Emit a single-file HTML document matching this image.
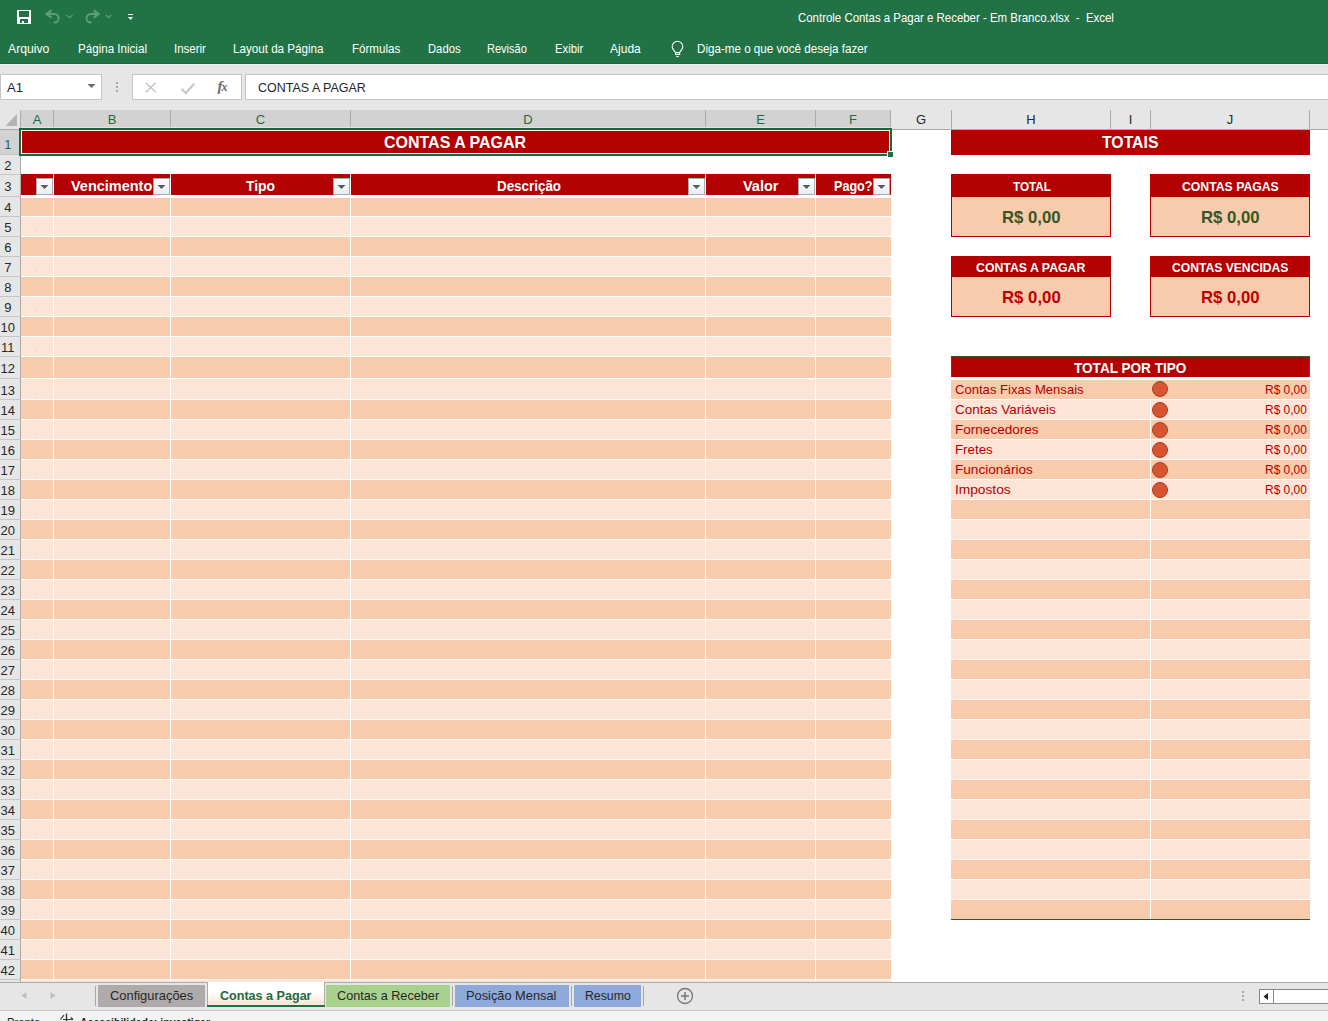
<!DOCTYPE html><html><head><meta charset="utf-8"><style>
html,body{margin:0;padding:0;width:1328px;height:1021px;overflow:hidden;background:#fff;position:relative}
body div{position:absolute}
.t{position:absolute;white-space:pre;line-height:normal;transform-origin:0 0;font-family:"Liberation Sans",sans-serif}
</style></head><body>
<div style="left:0px;top:0px;width:1328px;height:64px;background:#217346;"></div>
<span class="t" style="left:797.70px;top:10.23px;font-size:13px;font-weight:normal;color:#fff;transform:scaleX(0.8796);">Controle Contas a Pagar e Receber - Em Branco.xlsx  -  Excel</span>
<span class="t" style="left:8.20px;top:41.23px;font-size:13px;font-weight:normal;color:#fff;transform:scaleX(0.9394);">Arquivo</span>
<span class="t" style="left:77.70px;top:41.23px;font-size:13px;font-weight:normal;color:#fff;transform:scaleX(0.8920);">Página Inicial</span>
<span class="t" style="left:174.10px;top:41.23px;font-size:13px;font-weight:normal;color:#fff;transform:scaleX(0.8827);">Inserir</span>
<span class="t" style="left:233.40px;top:41.23px;font-size:13px;font-weight:normal;color:#fff;transform:scaleX(0.8946);">Layout da Página</span>
<span class="t" style="left:351.50px;top:41.23px;font-size:13px;font-weight:normal;color:#fff;transform:scaleX(0.8910);">Fórmulas</span>
<span class="t" style="left:427.60px;top:41.23px;font-size:13px;font-weight:normal;color:#fff;transform:scaleX(0.8651);">Dados</span>
<span class="t" style="left:487.20px;top:41.23px;font-size:13px;font-weight:normal;color:#fff;transform:scaleX(0.8469);">Revisão</span>
<span class="t" style="left:554.60px;top:41.23px;font-size:13px;font-weight:normal;color:#fff;transform:scaleX(0.8738);">Exibir</span>
<span class="t" style="left:610.10px;top:41.23px;font-size:13px;font-weight:normal;color:#fff;transform:scaleX(0.9255);">Ajuda</span>
<span class="t" style="left:697.30px;top:41.23px;font-size:13px;font-weight:normal;color:#fff;transform:scaleX(0.8942);">Diga-me o que você deseja fazer</span>
<svg style="position:absolute;left:0;top:0" width="140" height="32" viewBox="0 0 140 32">
<path d="M17 10H31V24H17Z M19 11H29V16.5Q29 17 28.5 17H19.5Q19 17 19 16.5Z M20 19H28V23H24V21H22V23H20Z" fill="#fff" fill-rule="evenodd"/>
<path d="M51.5 10.3 L46.6 14 L51.5 17.7" fill="none" stroke="#5a9f75" stroke-width="2.2"/>
<path d="M47.5 14 H54.5 A4.2 4.2 0 0 1 54.5 22.4 H53.8" fill="none" stroke="#5a9f75" stroke-width="2"/>
<path d="M66.5 15l3 2.6 3-2.6" fill="none" stroke="#5a9f75" stroke-width="1.2"/>
<path d="M93.7 10.3 L98.6 14 L93.7 17.7" fill="none" stroke="#5a9f75" stroke-width="2.2"/>
<path d="M97.7 14 H90.7 A4.2 4.2 0 0 0 90.7 22.4 H91.4" fill="none" stroke="#5a9f75" stroke-width="2"/>
<path d="M105.8 15l2.8 2.6 2.8-2.6" fill="none" stroke="#5a9f75" stroke-width="1.2"/>
<rect x="128" y="14" width="5" height="1" fill="#fff"/>
<path d="M128 17h5l-2.5 3z" fill="#fff"/>
</svg>
<svg style="position:absolute;left:0;top:0" width="700" height="64">
<path d="M675.6 52.5 L673.3 49.6 A5.22 5.22 0 1 1 681.7 49.6 L679.6 52.5 Z M675.6 52.5 V54.4 H679.6 V52.5" fill="none" stroke="#fff" stroke-width="1.2"/>
<path d="M676.2 56.6 H678.8" stroke="#fff" stroke-width="1"/>
</svg>
<div style="left:0px;top:64px;width:1328px;height:46px;background:#e6e6e6;"></div>
<div style="left:0px;top:63px;width:1328px;height:1px;background:#186b3c;"></div>
<div style="left:0px;top:64px;width:1328px;height:1px;background:#f0eded;"></div>
<div style="left:0px;top:74px;width:102px;height:26px;background:#fff;border:1px solid #c6c6c6;box-sizing:border-box"></div>
<span class="t" style="left:7.00px;top:80.23px;font-size:13px;font-weight:normal;color:#262626;transform:scaleX(1.0047);">A1</span>
<svg style="position:absolute;left:86px;top:82px" width="12" height="8"><path d="M1.5 2h8l-4 4z" fill="#6a6a6a"/></svg>
<div style="left:116px;top:82px;width:2px;height:2px;background:#a6a6a6;"></div>
<div style="left:116px;top:86px;width:2px;height:2px;background:#a6a6a6;"></div>
<div style="left:116px;top:90px;width:2px;height:2px;background:#a6a6a6;"></div>
<div style="left:132px;top:74px;width:110px;height:26px;background:#fff;border:1px solid #c6c6c6;box-sizing:border-box"></div>
<svg style="position:absolute;left:140px;top:78px" width="100" height="20" viewBox="0 0 100 20">
<path d="M5.8 4.8 l10 9.5 M15.8 4.8 l-10 9.5" stroke="#c4c4c4" stroke-width="1.5"/>
<path d="M41.5 10.8 l4.3 4.3 l8.5 -9.5" fill="none" stroke="#cccccc" stroke-width="2.4"/>
</svg>
<span class="t" style="left:217.5px;top:77.5px;font-family:'Liberation Serif',serif;font-style:italic;font-weight:bold;font-size:15px;color:#6a6a6a">f<span style="font-size:12px;margin-left:-1px">x</span></span>
<div style="left:245px;top:74px;width:1090px;height:26px;background:#fff;border:1px solid #c6c6c6;box-sizing:border-box"></div>
<span class="t" style="left:257.60px;top:80.23px;font-size:13px;font-weight:normal;color:#262626;transform:scaleX(0.9609);">CONTAS A PAGAR</span>
<div style="left:0px;top:110px;width:1328px;height:20px;background:#e6e6e6;"></div>
<div style="left:21px;top:110px;width:870px;height:17px;background:#d2d2d2;"></div>
<div style="left:21px;top:127px;width:870px;height:1px;background:#e8e0e0;"></div>
<div style="left:0px;top:129px;width:1328px;height:1px;background:#ababab;"></div>
<div style="left:20px;top:110px;width:1px;height:19px;background:#ababab;"></div>
<div style="left:53px;top:110px;width:1px;height:17px;background:#ababab;"></div>
<div style="left:170px;top:110px;width:1px;height:17px;background:#ababab;"></div>
<div style="left:350px;top:110px;width:1px;height:17px;background:#ababab;"></div>
<div style="left:705px;top:110px;width:1px;height:17px;background:#ababab;"></div>
<div style="left:815px;top:110px;width:1px;height:17px;background:#ababab;"></div>
<div style="left:890px;top:110px;width:1px;height:17px;background:#ababab;"></div>
<div style="left:951px;top:110px;width:1px;height:19px;background:#ababab;"></div>
<div style="left:1110px;top:110px;width:1px;height:19px;background:#ababab;"></div>
<div style="left:1150px;top:110px;width:1px;height:19px;background:#ababab;"></div>
<div style="left:1309px;top:110px;width:1px;height:19px;background:#ababab;"></div>
<span class="t" style="left:32.64px;top:112.23px;font-size:13px;font-weight:normal;color:#1e6b40;transform:scaleX(1.0000);">A</span>
<span class="t" style="left:107.68px;top:112.23px;font-size:13px;font-weight:normal;color:#1e6b40;transform:scaleX(1.0000);">B</span>
<span class="t" style="left:255.82px;top:112.23px;font-size:13px;font-weight:normal;color:#1e6b40;transform:scaleX(1.0000);">C</span>
<span class="t" style="left:523.32px;top:112.23px;font-size:13px;font-weight:normal;color:#1e6b40;transform:scaleX(1.0000);">D</span>
<span class="t" style="left:756.18px;top:112.23px;font-size:13px;font-weight:normal;color:#1e6b40;transform:scaleX(1.0000);">E</span>
<span class="t" style="left:849.03px;top:112.23px;font-size:13px;font-weight:normal;color:#1e6b40;transform:scaleX(1.0000);">F</span>
<span class="t" style="left:915.93px;top:112.23px;font-size:13px;font-weight:normal;color:#262626;transform:scaleX(1.0000);">G</span>
<span class="t" style="left:1026.32px;top:112.23px;font-size:13px;font-weight:normal;color:#262626;transform:scaleX(1.0000);">H</span>
<span class="t" style="left:1128.68px;top:112.23px;font-size:13px;font-weight:normal;color:#262626;transform:scaleX(1.0000);">I</span>
<span class="t" style="left:1226.75px;top:112.23px;font-size:13px;font-weight:normal;color:#262626;transform:scaleX(1.0000);">J</span>
<span class="t" style="left:1335.68px;top:112.23px;font-size:13px;font-weight:normal;color:#262626;transform:scaleX(1.0000);">K</span>
<svg style="position:absolute;left:0;top:110px" width="20" height="20"><path d="M17 4v12h-11.5z" fill="#b4b4b4"/></svg>
<div style="left:0px;top:130px;width:20px;height:852px;background:#e6e6e6;"></div>
<div style="left:20px;top:130px;width:1px;height:852px;background:#ababab;"></div>
<div style="left:0px;top:130px;width:20px;height:24px;background:#d2d2d2;"></div>
<div style="left:0px;top:154px;width:20px;height:1px;background:#c6c6c6;"></div>
<span class="t" style="left:4.19px;top:137.24px;font-size:13px;font-weight:normal;color:#1e6b40;transform:scaleX(1.0000);">1</span>
<div style="left:0px;top:174px;width:20px;height:1px;background:#c6c6c6;"></div>
<span class="t" style="left:4.19px;top:158.24px;font-size:13px;font-weight:normal;color:#262626;transform:scaleX(1.0000);">2</span>
<div style="left:0px;top:196px;width:20px;height:1px;background:#c6c6c6;"></div>
<span class="t" style="left:4.19px;top:179.24px;font-size:13px;font-weight:normal;color:#262626;transform:scaleX(1.0000);">3</span>
<div style="left:0px;top:216px;width:20px;height:1px;background:#c6c6c6;"></div>
<span class="t" style="left:4.19px;top:200.24px;font-size:13px;font-weight:normal;color:#262626;transform:scaleX(1.0000);">4</span>
<div style="left:0px;top:236px;width:20px;height:1px;background:#c6c6c6;"></div>
<span class="t" style="left:4.19px;top:220.24px;font-size:13px;font-weight:normal;color:#262626;transform:scaleX(1.0000);">5</span>
<div style="left:0px;top:256px;width:20px;height:1px;background:#c6c6c6;"></div>
<span class="t" style="left:4.19px;top:240.24px;font-size:13px;font-weight:normal;color:#262626;transform:scaleX(1.0000);">6</span>
<div style="left:0px;top:276px;width:20px;height:1px;background:#c6c6c6;"></div>
<span class="t" style="left:4.19px;top:260.24px;font-size:13px;font-weight:normal;color:#262626;transform:scaleX(1.0000);">7</span>
<div style="left:0px;top:296px;width:20px;height:1px;background:#c6c6c6;"></div>
<span class="t" style="left:4.19px;top:280.24px;font-size:13px;font-weight:normal;color:#262626;transform:scaleX(1.0000);">8</span>
<div style="left:0px;top:316px;width:20px;height:1px;background:#c6c6c6;"></div>
<span class="t" style="left:4.19px;top:300.24px;font-size:13px;font-weight:normal;color:#262626;transform:scaleX(1.0000);">9</span>
<div style="left:0px;top:336px;width:20px;height:1px;background:#c6c6c6;"></div>
<span class="t" style="left:0.58px;top:320.24px;font-size:13px;font-weight:normal;color:#262626;transform:scaleX(1.0000);">10</span>
<div style="left:0px;top:356px;width:20px;height:1px;background:#c6c6c6;"></div>
<span class="t" style="left:1.04px;top:340.24px;font-size:13px;font-weight:normal;color:#262626;transform:scaleX(1.0000);">11</span>
<div style="left:0px;top:378px;width:20px;height:1px;background:#c6c6c6;"></div>
<span class="t" style="left:0.58px;top:361.24px;font-size:13px;font-weight:normal;color:#262626;transform:scaleX(1.0000);">12</span>
<div style="left:0px;top:399px;width:20px;height:1px;background:#c6c6c6;"></div>
<span class="t" style="left:0.58px;top:383.24px;font-size:13px;font-weight:normal;color:#262626;transform:scaleX(1.0000);">13</span>
<div style="left:0px;top:419px;width:20px;height:1px;background:#c6c6c6;"></div>
<span class="t" style="left:0.58px;top:403.24px;font-size:13px;font-weight:normal;color:#262626;transform:scaleX(1.0000);">14</span>
<div style="left:0px;top:439px;width:20px;height:1px;background:#c6c6c6;"></div>
<span class="t" style="left:0.58px;top:423.24px;font-size:13px;font-weight:normal;color:#262626;transform:scaleX(1.0000);">15</span>
<div style="left:0px;top:459px;width:20px;height:1px;background:#c6c6c6;"></div>
<span class="t" style="left:0.58px;top:443.24px;font-size:13px;font-weight:normal;color:#262626;transform:scaleX(1.0000);">16</span>
<div style="left:0px;top:479px;width:20px;height:1px;background:#c6c6c6;"></div>
<span class="t" style="left:0.58px;top:463.24px;font-size:13px;font-weight:normal;color:#262626;transform:scaleX(1.0000);">17</span>
<div style="left:0px;top:499px;width:20px;height:1px;background:#c6c6c6;"></div>
<span class="t" style="left:0.58px;top:483.24px;font-size:13px;font-weight:normal;color:#262626;transform:scaleX(1.0000);">18</span>
<div style="left:0px;top:519px;width:20px;height:1px;background:#c6c6c6;"></div>
<span class="t" style="left:0.58px;top:503.24px;font-size:13px;font-weight:normal;color:#262626;transform:scaleX(1.0000);">19</span>
<div style="left:0px;top:539px;width:20px;height:1px;background:#c6c6c6;"></div>
<span class="t" style="left:0.58px;top:523.24px;font-size:13px;font-weight:normal;color:#262626;transform:scaleX(1.0000);">20</span>
<div style="left:0px;top:559px;width:20px;height:1px;background:#c6c6c6;"></div>
<span class="t" style="left:0.58px;top:543.24px;font-size:13px;font-weight:normal;color:#262626;transform:scaleX(1.0000);">21</span>
<div style="left:0px;top:579px;width:20px;height:1px;background:#c6c6c6;"></div>
<span class="t" style="left:0.58px;top:563.24px;font-size:13px;font-weight:normal;color:#262626;transform:scaleX(1.0000);">22</span>
<div style="left:0px;top:599px;width:20px;height:1px;background:#c6c6c6;"></div>
<span class="t" style="left:0.58px;top:583.24px;font-size:13px;font-weight:normal;color:#262626;transform:scaleX(1.0000);">23</span>
<div style="left:0px;top:619px;width:20px;height:1px;background:#c6c6c6;"></div>
<span class="t" style="left:0.58px;top:603.24px;font-size:13px;font-weight:normal;color:#262626;transform:scaleX(1.0000);">24</span>
<div style="left:0px;top:639px;width:20px;height:1px;background:#c6c6c6;"></div>
<span class="t" style="left:0.58px;top:623.24px;font-size:13px;font-weight:normal;color:#262626;transform:scaleX(1.0000);">25</span>
<div style="left:0px;top:659px;width:20px;height:1px;background:#c6c6c6;"></div>
<span class="t" style="left:0.58px;top:643.24px;font-size:13px;font-weight:normal;color:#262626;transform:scaleX(1.0000);">26</span>
<div style="left:0px;top:679px;width:20px;height:1px;background:#c6c6c6;"></div>
<span class="t" style="left:0.58px;top:663.24px;font-size:13px;font-weight:normal;color:#262626;transform:scaleX(1.0000);">27</span>
<div style="left:0px;top:699px;width:20px;height:1px;background:#c6c6c6;"></div>
<span class="t" style="left:0.58px;top:683.24px;font-size:13px;font-weight:normal;color:#262626;transform:scaleX(1.0000);">28</span>
<div style="left:0px;top:719px;width:20px;height:1px;background:#c6c6c6;"></div>
<span class="t" style="left:0.58px;top:703.24px;font-size:13px;font-weight:normal;color:#262626;transform:scaleX(1.0000);">29</span>
<div style="left:0px;top:739px;width:20px;height:1px;background:#c6c6c6;"></div>
<span class="t" style="left:0.58px;top:723.24px;font-size:13px;font-weight:normal;color:#262626;transform:scaleX(1.0000);">30</span>
<div style="left:0px;top:759px;width:20px;height:1px;background:#c6c6c6;"></div>
<span class="t" style="left:0.58px;top:743.24px;font-size:13px;font-weight:normal;color:#262626;transform:scaleX(1.0000);">31</span>
<div style="left:0px;top:779px;width:20px;height:1px;background:#c6c6c6;"></div>
<span class="t" style="left:0.58px;top:763.24px;font-size:13px;font-weight:normal;color:#262626;transform:scaleX(1.0000);">32</span>
<div style="left:0px;top:799px;width:20px;height:1px;background:#c6c6c6;"></div>
<span class="t" style="left:0.58px;top:783.24px;font-size:13px;font-weight:normal;color:#262626;transform:scaleX(1.0000);">33</span>
<div style="left:0px;top:819px;width:20px;height:1px;background:#c6c6c6;"></div>
<span class="t" style="left:0.58px;top:803.24px;font-size:13px;font-weight:normal;color:#262626;transform:scaleX(1.0000);">34</span>
<div style="left:0px;top:839px;width:20px;height:1px;background:#c6c6c6;"></div>
<span class="t" style="left:0.58px;top:823.24px;font-size:13px;font-weight:normal;color:#262626;transform:scaleX(1.0000);">35</span>
<div style="left:0px;top:859px;width:20px;height:1px;background:#c6c6c6;"></div>
<span class="t" style="left:0.58px;top:843.24px;font-size:13px;font-weight:normal;color:#262626;transform:scaleX(1.0000);">36</span>
<div style="left:0px;top:879px;width:20px;height:1px;background:#c6c6c6;"></div>
<span class="t" style="left:0.58px;top:863.24px;font-size:13px;font-weight:normal;color:#262626;transform:scaleX(1.0000);">37</span>
<div style="left:0px;top:899px;width:20px;height:1px;background:#c6c6c6;"></div>
<span class="t" style="left:0.58px;top:883.24px;font-size:13px;font-weight:normal;color:#262626;transform:scaleX(1.0000);">38</span>
<div style="left:0px;top:919px;width:20px;height:1px;background:#c6c6c6;"></div>
<span class="t" style="left:0.58px;top:903.24px;font-size:13px;font-weight:normal;color:#262626;transform:scaleX(1.0000);">39</span>
<div style="left:0px;top:939px;width:20px;height:1px;background:#c6c6c6;"></div>
<span class="t" style="left:0.58px;top:923.24px;font-size:13px;font-weight:normal;color:#262626;transform:scaleX(1.0000);">40</span>
<div style="left:0px;top:959px;width:20px;height:1px;background:#c6c6c6;"></div>
<span class="t" style="left:0.58px;top:943.24px;font-size:13px;font-weight:normal;color:#262626;transform:scaleX(1.0000);">41</span>
<div style="left:0px;top:979px;width:20px;height:1px;background:#c6c6c6;"></div>
<span class="t" style="left:0.58px;top:963.24px;font-size:13px;font-weight:normal;color:#262626;transform:scaleX(1.0000);">42</span>
<div style="left:21px;top:130px;width:1307px;height:852px;background:#fff;"></div>
<div style="left:21px;top:130px;width:870px;height:25px;background:#b30000;"></div>
<div style="left:21px;top:174px;width:870px;height:21px;background:#b30000;"></div>
<div style="left:53px;top:174px;width:1px;height:21px;background:#fff;"></div>
<div style="left:170px;top:174px;width:1px;height:21px;background:#fff;"></div>
<div style="left:350px;top:174px;width:1px;height:21px;background:#fff;"></div>
<div style="left:705px;top:174px;width:1px;height:21px;background:#fff;"></div>
<div style="left:815px;top:174px;width:1px;height:21px;background:#fff;"></div>
<div style="left:21px;top:198px;width:870px;height:18px;background:#f8cbad;"></div>
<div style="left:21px;top:217px;width:870px;height:19px;background:#fce4d6;"></div>
<div style="left:21px;top:237px;width:870px;height:19px;background:#f8cbad;"></div>
<div style="left:21px;top:257px;width:870px;height:19px;background:#fce4d6;"></div>
<div style="left:21px;top:277px;width:870px;height:19px;background:#f8cbad;"></div>
<div style="left:21px;top:297px;width:870px;height:19px;background:#fce4d6;"></div>
<div style="left:21px;top:317px;width:870px;height:19px;background:#f8cbad;"></div>
<div style="left:21px;top:337px;width:870px;height:19px;background:#fce4d6;"></div>
<div style="left:21px;top:357px;width:870px;height:21px;background:#f8cbad;"></div>
<div style="left:21px;top:379px;width:870px;height:20px;background:#fce4d6;"></div>
<div style="left:21px;top:400px;width:870px;height:19px;background:#f8cbad;"></div>
<div style="left:21px;top:420px;width:870px;height:19px;background:#fce4d6;"></div>
<div style="left:21px;top:440px;width:870px;height:19px;background:#f8cbad;"></div>
<div style="left:21px;top:460px;width:870px;height:19px;background:#fce4d6;"></div>
<div style="left:21px;top:480px;width:870px;height:19px;background:#f8cbad;"></div>
<div style="left:21px;top:500px;width:870px;height:19px;background:#fce4d6;"></div>
<div style="left:21px;top:520px;width:870px;height:19px;background:#f8cbad;"></div>
<div style="left:21px;top:540px;width:870px;height:19px;background:#fce4d6;"></div>
<div style="left:21px;top:560px;width:870px;height:19px;background:#f8cbad;"></div>
<div style="left:21px;top:580px;width:870px;height:19px;background:#fce4d6;"></div>
<div style="left:21px;top:600px;width:870px;height:19px;background:#f8cbad;"></div>
<div style="left:21px;top:620px;width:870px;height:19px;background:#fce4d6;"></div>
<div style="left:21px;top:640px;width:870px;height:19px;background:#f8cbad;"></div>
<div style="left:21px;top:660px;width:870px;height:19px;background:#fce4d6;"></div>
<div style="left:21px;top:680px;width:870px;height:19px;background:#f8cbad;"></div>
<div style="left:21px;top:700px;width:870px;height:19px;background:#fce4d6;"></div>
<div style="left:21px;top:720px;width:870px;height:19px;background:#f8cbad;"></div>
<div style="left:21px;top:740px;width:870px;height:19px;background:#fce4d6;"></div>
<div style="left:21px;top:760px;width:870px;height:19px;background:#f8cbad;"></div>
<div style="left:21px;top:780px;width:870px;height:19px;background:#fce4d6;"></div>
<div style="left:21px;top:800px;width:870px;height:19px;background:#f8cbad;"></div>
<div style="left:21px;top:820px;width:870px;height:19px;background:#fce4d6;"></div>
<div style="left:21px;top:840px;width:870px;height:19px;background:#f8cbad;"></div>
<div style="left:21px;top:860px;width:870px;height:19px;background:#fce4d6;"></div>
<div style="left:21px;top:880px;width:870px;height:19px;background:#f8cbad;"></div>
<div style="left:21px;top:900px;width:870px;height:19px;background:#fce4d6;"></div>
<div style="left:21px;top:920px;width:870px;height:19px;background:#f8cbad;"></div>
<div style="left:21px;top:940px;width:870px;height:19px;background:#fce4d6;"></div>
<div style="left:21px;top:960px;width:870px;height:19px;background:#f8cbad;"></div>
<div style="left:21px;top:980px;width:870px;height:2px;background:#fce4d6;"></div>
<div style="left:53px;top:198px;width:1px;height:784px;background:#fff;"></div>
<div style="left:170px;top:198px;width:1px;height:784px;background:#fff;"></div>
<div style="left:350px;top:198px;width:1px;height:784px;background:#fff;"></div>
<div style="left:705px;top:198px;width:1px;height:784px;background:#fff;"></div>
<div style="left:815px;top:198px;width:1px;height:784px;background:#fff;"></div>
<div style="left:36px;top:231px;width:1px;height:1px;background:#f6c2a2;"></div>
<div style="left:36px;top:271px;width:1px;height:1px;background:#f6c2a2;"></div>
<div style="left:36px;top:311px;width:1px;height:1px;background:#f6c2a2;"></div>
<div style="left:36px;top:351px;width:1px;height:1px;background:#f6c2a2;"></div>
<div style="left:36px;top:394px;width:1px;height:1px;background:#f6c2a2;"></div>
<div style="left:36px;top:434px;width:1px;height:1px;background:#f6c2a2;"></div>
<div style="left:36px;top:474px;width:1px;height:1px;background:#f6c2a2;"></div>
<div style="left:36px;top:514px;width:1px;height:1px;background:#f6c2a2;"></div>
<div style="left:36px;top:554px;width:1px;height:1px;background:#f6c2a2;"></div>
<div style="left:36px;top:594px;width:1px;height:1px;background:#f6c2a2;"></div>
<div style="left:36px;top:634px;width:1px;height:1px;background:#f6c2a2;"></div>
<div style="left:36px;top:674px;width:1px;height:1px;background:#f6c2a2;"></div>
<div style="left:36px;top:714px;width:1px;height:1px;background:#f6c2a2;"></div>
<div style="left:36px;top:754px;width:1px;height:1px;background:#f6c2a2;"></div>
<div style="left:36px;top:794px;width:1px;height:1px;background:#f6c2a2;"></div>
<div style="left:36px;top:834px;width:1px;height:1px;background:#f6c2a2;"></div>
<div style="left:36px;top:874px;width:1px;height:1px;background:#f6c2a2;"></div>
<div style="left:36px;top:914px;width:1px;height:1px;background:#f6c2a2;"></div>
<div style="left:36px;top:954px;width:1px;height:1px;background:#f6c2a2;"></div>
<span class="t" style="left:384.30px;top:132.89px;font-size:16.7px;font-weight:bold;color:#fff;transform:scaleX(0.9578);">CONTAS A PAGAR</span>
<span class="t" style="left:71.20px;top:178.33px;font-size:14px;font-weight:bold;color:#fff;transform:scaleX(1.0342);">Vencimento</span>
<span class="t" style="left:246.20px;top:178.33px;font-size:14px;font-weight:bold;color:#fff;transform:scaleX(0.9911);">Tipo</span>
<span class="t" style="left:496.50px;top:178.33px;font-size:14px;font-weight:bold;color:#fff;transform:scaleX(0.9564);">Descrição</span>
<span class="t" style="left:743.00px;top:178.33px;font-size:14px;font-weight:bold;color:#fff;transform:scaleX(1.0342);">Valor</span>
<span class="t" style="left:833.70px;top:178.33px;font-size:14px;font-weight:bold;color:#fff;transform:scaleX(0.9002);">Pago?</span>
<div style="left:36px;top:178px;width:17px;height:17px;box-sizing:border-box;border:1px solid #a3abb5;background:linear-gradient(#fdfdfe,#e9edf2)"></div>
<svg style="position:absolute;left:36px;top:178px" width="17" height="17"><path d="M4.5 7h8l-4 4z" fill="#5a5a5a"/></svg>
<div style="left:153px;top:178px;width:17px;height:17px;box-sizing:border-box;border:1px solid #a3abb5;background:linear-gradient(#fdfdfe,#e9edf2)"></div>
<svg style="position:absolute;left:153px;top:178px" width="17" height="17"><path d="M4.5 7h8l-4 4z" fill="#5a5a5a"/></svg>
<div style="left:333px;top:178px;width:17px;height:17px;box-sizing:border-box;border:1px solid #a3abb5;background:linear-gradient(#fdfdfe,#e9edf2)"></div>
<svg style="position:absolute;left:333px;top:178px" width="17" height="17"><path d="M4.5 7h8l-4 4z" fill="#5a5a5a"/></svg>
<div style="left:688px;top:178px;width:17px;height:17px;box-sizing:border-box;border:1px solid #a3abb5;background:linear-gradient(#fdfdfe,#e9edf2)"></div>
<svg style="position:absolute;left:688px;top:178px" width="17" height="17"><path d="M4.5 7h8l-4 4z" fill="#5a5a5a"/></svg>
<div style="left:798px;top:178px;width:17px;height:17px;box-sizing:border-box;border:1px solid #a3abb5;background:linear-gradient(#fdfdfe,#e9edf2)"></div>
<svg style="position:absolute;left:798px;top:178px" width="17" height="17"><path d="M4.5 7h8l-4 4z" fill="#5a5a5a"/></svg>
<div style="left:873px;top:178px;width:17px;height:17px;box-sizing:border-box;border:1px solid #a3abb5;background:linear-gradient(#fdfdfe,#e9edf2)"></div>
<svg style="position:absolute;left:873px;top:178px" width="17" height="17"><path d="M4.5 7h8l-4 4z" fill="#5a5a5a"/></svg>
<div style="left:19px;top:128px;width:873px;height:28px;box-sizing:border-box;border:2px solid #146c3a;"></div>
<div style="left:21px;top:130px;width:869px;height:24px;box-sizing:border-box;border:1px solid #fff;"></div>
<div style="left:887px;top:151px;width:7px;height:7px;background:#fff;"></div>
<div style="left:888px;top:152px;width:5px;height:5px;background:#1e6e40;"></div>
<div style="left:951px;top:130px;width:359px;height:25px;background:#b30000;"></div>
<span class="t" style="left:1101.90px;top:132.80px;font-size:16.8px;font-weight:bold;color:#fff;transform:scaleX(0.9407);">TOTAIS</span>
<div style="left:951px;top:174px;width:160px;height:23px;background:#b30000;"></div>
<div style="left:951px;top:197px;width:160px;height:40px;background:#f8cbad;box-sizing:border-box;border:1px solid #b30000;border-top:none"></div>
<span class="t" style="left:1013.00px;top:179.69px;font-size:12.5px;font-weight:bold;color:#fff;transform:scaleX(0.9383);">TOTAL</span>
<span class="t" style="left:1001.90px;top:207.66px;font-size:16.4px;font-weight:bold;color:#375623;transform:scaleX(1.0194);">R$ 0,00</span>
<div style="left:1150px;top:174px;width:160px;height:23px;background:#b30000;"></div>
<div style="left:1150px;top:197px;width:160px;height:40px;background:#f8cbad;box-sizing:border-box;border:1px solid #b30000;border-top:none"></div>
<span class="t" style="left:1182.10px;top:179.69px;font-size:12.5px;font-weight:bold;color:#fff;transform:scaleX(0.9790);">CONTAS PAGAS</span>
<span class="t" style="left:1200.90px;top:207.66px;font-size:16.4px;font-weight:bold;color:#375623;transform:scaleX(1.0212);">R$ 0,00</span>
<div style="left:951px;top:256px;width:160px;height:21px;background:#b30000;"></div>
<div style="left:951px;top:277px;width:160px;height:40px;background:#f8cbad;box-sizing:border-box;border:1px solid #b30000;border-top:none"></div>
<span class="t" style="left:976.30px;top:260.69px;font-size:12.5px;font-weight:bold;color:#fff;transform:scaleX(0.9845);">CONTAS A PAGAR</span>
<span class="t" style="left:1001.60px;top:288.16px;font-size:16.4px;font-weight:bold;color:#c00000;transform:scaleX(1.0229);">R$ 0,00</span>
<div style="left:1150px;top:256px;width:160px;height:21px;background:#b30000;"></div>
<div style="left:1150px;top:277px;width:160px;height:40px;background:#f8cbad;box-sizing:border-box;border:1px solid #b30000;border-top:none"></div>
<span class="t" style="left:1172.40px;top:260.69px;font-size:12.5px;font-weight:bold;color:#fff;transform:scaleX(0.9705);">CONTAS VENCIDAS</span>
<span class="t" style="left:1200.60px;top:288.16px;font-size:16.4px;font-weight:bold;color:#c00000;transform:scaleX(1.0212);">R$ 0,00</span>
<div style="left:951px;top:356px;width:359px;height:21px;background:#b30000;border:1px solid #375623;border-bottom:none;box-sizing:border-box"></div>
<span class="t" style="left:1074.10px;top:360.33px;font-size:14px;font-weight:bold;color:#fff;transform:scaleX(0.9696);">TOTAL POR TIPO</span>
<div style="left:951px;top:380px;width:359px;height:19px;background:#f8cbad;"></div>
<div style="left:951px;top:400px;width:359px;height:19px;background:#fce4d6;"></div>
<div style="left:951px;top:420px;width:359px;height:19px;background:#f8cbad;"></div>
<div style="left:951px;top:440px;width:359px;height:19px;background:#fce4d6;"></div>
<div style="left:951px;top:460px;width:359px;height:19px;background:#f8cbad;"></div>
<div style="left:951px;top:480px;width:359px;height:19px;background:#fce4d6;"></div>
<div style="left:951px;top:500px;width:359px;height:19px;background:#f8cbad;"></div>
<div style="left:951px;top:520px;width:359px;height:19px;background:#fce4d6;"></div>
<div style="left:951px;top:540px;width:359px;height:19px;background:#f8cbad;"></div>
<div style="left:951px;top:560px;width:359px;height:19px;background:#fce4d6;"></div>
<div style="left:951px;top:580px;width:359px;height:19px;background:#f8cbad;"></div>
<div style="left:951px;top:600px;width:359px;height:19px;background:#fce4d6;"></div>
<div style="left:951px;top:620px;width:359px;height:19px;background:#f8cbad;"></div>
<div style="left:951px;top:640px;width:359px;height:19px;background:#fce4d6;"></div>
<div style="left:951px;top:660px;width:359px;height:19px;background:#f8cbad;"></div>
<div style="left:951px;top:680px;width:359px;height:19px;background:#fce4d6;"></div>
<div style="left:951px;top:700px;width:359px;height:19px;background:#f8cbad;"></div>
<div style="left:951px;top:720px;width:359px;height:19px;background:#fce4d6;"></div>
<div style="left:951px;top:740px;width:359px;height:19px;background:#f8cbad;"></div>
<div style="left:951px;top:760px;width:359px;height:19px;background:#fce4d6;"></div>
<div style="left:951px;top:780px;width:359px;height:19px;background:#f8cbad;"></div>
<div style="left:951px;top:800px;width:359px;height:19px;background:#fce4d6;"></div>
<div style="left:951px;top:820px;width:359px;height:19px;background:#f8cbad;"></div>
<div style="left:951px;top:840px;width:359px;height:19px;background:#fce4d6;"></div>
<div style="left:951px;top:860px;width:359px;height:19px;background:#f8cbad;"></div>
<div style="left:951px;top:880px;width:359px;height:19px;background:#fce4d6;"></div>
<div style="left:951px;top:900px;width:359px;height:19px;background:#f8cbad;"></div>
<div style="left:1150px;top:400px;width:1px;height:519px;background:#fff;"></div>
<div style="left:951px;top:919px;width:359px;height:1px;background:#375623;"></div>
<span class="t" style="left:954.70px;top:382.24px;font-size:13px;font-weight:normal;color:#b30000;transform:scaleX(1.0058);">Contas Fixas Mensais</span>
<span class="t" style="left:1264.70px;top:382.24px;font-size:13px;font-weight:normal;color:#b30000;transform:scaleX(0.9196);">R$ 0,00</span>
<div style="left:1152px;top:381px;width:16px;height:16px;border-radius:50%;box-sizing:border-box;background:#d75631;border:1px solid #a63c1e"></div>
<span class="t" style="left:954.70px;top:402.24px;font-size:13px;font-weight:normal;color:#b30000;transform:scaleX(1.0339);">Contas Variáveis</span>
<span class="t" style="left:1264.70px;top:402.24px;font-size:13px;font-weight:normal;color:#b30000;transform:scaleX(0.9196);">R$ 0,00</span>
<div style="left:1152px;top:401.5px;width:16px;height:16px;border-radius:50%;box-sizing:border-box;background:#d75631;border:1px solid #a63c1e"></div>
<span class="t" style="left:954.70px;top:422.24px;font-size:13px;font-weight:normal;color:#b30000;transform:scaleX(1.0423);">Fornecedores</span>
<span class="t" style="left:1264.70px;top:422.24px;font-size:13px;font-weight:normal;color:#b30000;transform:scaleX(0.9196);">R$ 0,00</span>
<div style="left:1152px;top:421.5px;width:16px;height:16px;border-radius:50%;box-sizing:border-box;background:#d75631;border:1px solid #a63c1e"></div>
<span class="t" style="left:954.70px;top:442.24px;font-size:13px;font-weight:normal;color:#b30000;transform:scaleX(1.0229);">Fretes</span>
<span class="t" style="left:1264.70px;top:442.24px;font-size:13px;font-weight:normal;color:#b30000;transform:scaleX(0.9196);">R$ 0,00</span>
<div style="left:1152px;top:441.5px;width:16px;height:16px;border-radius:50%;box-sizing:border-box;background:#d75631;border:1px solid #a63c1e"></div>
<span class="t" style="left:954.70px;top:462.24px;font-size:13px;font-weight:normal;color:#b30000;transform:scaleX(1.0453);">Funcionários</span>
<span class="t" style="left:1264.70px;top:462.24px;font-size:13px;font-weight:normal;color:#b30000;transform:scaleX(0.9196);">R$ 0,00</span>
<div style="left:1152px;top:461.5px;width:16px;height:16px;border-radius:50%;box-sizing:border-box;background:#d75631;border:1px solid #a63c1e"></div>
<span class="t" style="left:954.70px;top:482.24px;font-size:13px;font-weight:normal;color:#b30000;transform:scaleX(1.0547);">Impostos</span>
<span class="t" style="left:1264.70px;top:482.24px;font-size:13px;font-weight:normal;color:#b30000;transform:scaleX(0.9196);">R$ 0,00</span>
<div style="left:1152px;top:481.5px;width:16px;height:16px;border-radius:50%;box-sizing:border-box;background:#d75631;border:1px solid #a63c1e"></div>
<div style="left:0px;top:982px;width:1328px;height:1px;background:#ababab;"></div>
<div style="left:0px;top:983px;width:1328px;height:27px;background:#e6e6e6;"></div>
<div style="left:0px;top:1010px;width:1328px;height:1px;background:#c6c6c6;"></div>
<div style="left:0px;top:1011px;width:1328px;height:10px;background:#f3f3f3;"></div>
<svg style="position:absolute;left:0;top:983px" width="100" height="27"><path d="M26.5 9v7l-5-3.5z" fill="#bfbfbf"/><path d="M50.5 9v7l5-3.5z" fill="#bfbfbf"/></svg>
<div style="left:95px;top:986px;width:1px;height:20px;background:#a6a6a6;"></div>
<div style="left:98px;top:985px;width:107px;height:22px;background:#b0abab;"></div>
<span class="t" style="left:109.70px;top:988.05px;font-size:13.2px;font-weight:normal;color:#262626;transform:scaleX(0.9784);">Configurações</span>
<div style="left:207px;top:982px;width:118px;height:24px;background:#fff;background:linear-gradient(#fff 40%,#fbe1d3);border-left:1px solid #ababab;border-right:1px solid #ababab;box-sizing:border-box"></div>
<div style="left:207px;top:1005px;width:118px;height:2px;background:#1e7145;"></div>
<span class="t" style="left:219.60px;top:988.05px;font-size:13.2px;font-weight:bold;color:#1e6b40;transform:scaleX(0.9532);">Contas a Pagar</span>
<div style="left:326px;top:985px;width:124px;height:22px;background:#a9d18e;"></div>
<span class="t" style="left:336.60px;top:988.05px;font-size:13.2px;font-weight:normal;color:#262626;transform:scaleX(0.9606);">Contas a Receber</span>
<div style="left:452px;top:986px;width:1px;height:20px;background:#a6a6a6;"></div>
<div style="left:455px;top:985px;width:114px;height:22px;background:#8eaadb;"></div>
<span class="t" style="left:466.40px;top:988.05px;font-size:13.2px;font-weight:normal;color:#262626;transform:scaleX(0.9711);">Posição Mensal</span>
<div style="left:571px;top:986px;width:1px;height:20px;background:#a6a6a6;"></div>
<div style="left:574px;top:985px;width:67px;height:22px;background:#8eaadb;"></div>
<span class="t" style="left:584.50px;top:988.05px;font-size:13.2px;font-weight:normal;color:#262626;transform:scaleX(0.9315);">Resumo</span>
<div style="left:643px;top:986px;width:1px;height:20px;background:#a6a6a6;"></div>
<svg style="position:absolute;left:676px;top:987px" width="18" height="18"><circle cx="9" cy="9" r="7.5" fill="none" stroke="#777" stroke-width="1.3"/><path d="M9 5v8M5 9h8" stroke="#777" stroke-width="1.5"/></svg>
<div style="left:1242px;top:991px;width:2px;height:2px;background:#a6a6a6;"></div>
<div style="left:1242px;top:995px;width:2px;height:2px;background:#a6a6a6;"></div>
<div style="left:1242px;top:999px;width:2px;height:2px;background:#a6a6a6;"></div>
<div style="left:1259px;top:989px;width:80px;height:15px;background:#fff;border:1px solid #888;box-sizing:border-box"></div>
<div style="left:1273px;top:989px;width:1px;height:15px;background:#888;"></div>
<svg style="position:absolute;left:1259px;top:989px" width="15" height="15"><path d="M9 4v7l-4.5-3.5z" fill="#222"/></svg>
<span class="t" style="left:6.60px;top:1015.24px;font-size:13px;font-weight:normal;color:#262626;transform:scaleX(0.8672);">Pronto</span>
<span class="t" style="left:80.30px;top:1015.24px;font-size:13px;font-weight:bold;color:#262626;transform:scaleX(0.8110);">Acessibilidade: investigar</span>
<svg style="position:absolute;left:0;top:1000px" width="90" height="21"><path d="M66.5 13.5V21" stroke="#333" stroke-width="1.3"/><path d="M60.5 19.5L64 15" stroke="#333" stroke-width="1.1"/><path d="M63 19.5H73M70.8 17.3L73 19.5" stroke="#333" stroke-width="1.1" fill="none"/></svg>
</body></html>
